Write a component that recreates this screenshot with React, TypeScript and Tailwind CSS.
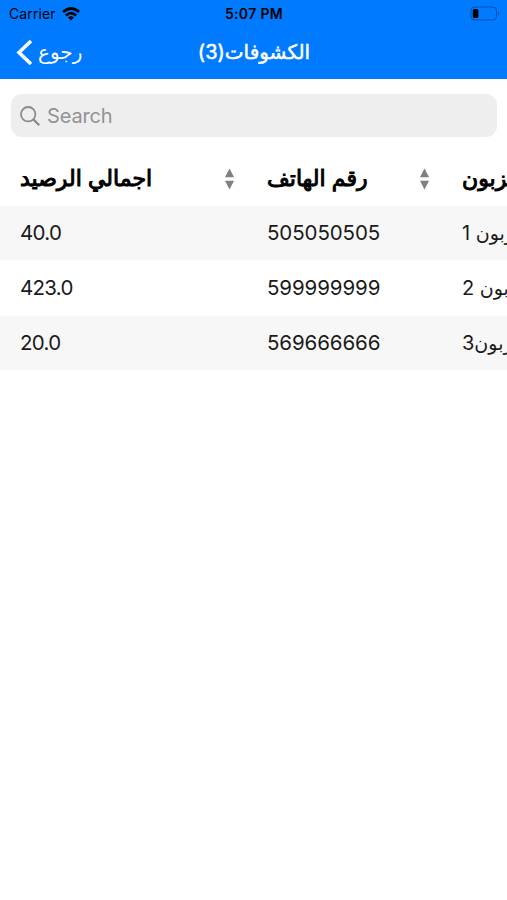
interface Customer {
  balance: string;
  phone: string;
  name: string;
  suffix: string;
}

const customers: Customer[] = [
  { balance: "40.0", phone: "505050505", name: "زبون", suffix: " 1" },
  { balance: "423.0", phone: "599999999", name: "زبون", suffix: " 2" },
  { balance: "20.0", phone: "569666666", name: "زبون", suffix: "3" },
];

const SortIcon = () => (
  <svg className="w-[10px] h-[22px] shrink-0" viewBox="0 0 10 22" fill="#808080">
    <path d="M4.5 0.5L9.1 9.3H0z" />
    <path d="M0 12.8H9.1L4.5 21.5z" />
  </svg>
);

const StatusBar = () => (
  <div className="h-[27px] grid grid-cols-3 items-center pl-[9px] pr-[7px] text-black">
    <div className="flex items-center gap-[6px]">
      <span className="text-[14px] leading-none tracking-[0.1px]">Carrier</span>
      <svg className="w-[18px] h-[14px]" viewBox="0 0 18 14" fill="none" stroke="#000" strokeWidth="2.7">
        <path d="M1 5.1Q9 -2.1 17 5.1" />
        <path d="M3.9 8.4Q9 3.9 14.1 8.4" />
        <path d="M9 13.6L6 10.5Q9 8.1 12 10.5z" fill="#000" stroke="none" />
      </svg>
    </div>
    <span className="text-center text-[14px] leading-none font-semibold tracking-[0.35px] pt-px pr-px">5:07 PM</span>
    <svg className="w-[30px] h-[15px] justify-self-end" viewBox="0 0 30 15">
      <rect x="1" y="1" width="25.5" height="13" rx="3.5" fill="none" stroke="#004fa8" />
      <rect x="2.8" y="3" width="5.6" height="9" rx="1.5" fill="#000" />
      <path d="M28 5.2Q30 7.5 28 9.8z" fill="#004fa8" />
    </svg>
  </div>
);

const NavBar = () => (
  <div className="h-[52px] grid grid-cols-3 items-center pl-[16px] pr-[15px] pb-[2px] text-white">
    <button className="flex items-center gap-[5px]">
      <svg className="w-[17px] h-[27px]" viewBox="0 0 17 27" fill="none" stroke="#fff" strokeWidth="3.6">
        <path d="M15 2L3 13.5L15 25" />
      </svg>
      <span dir="rtl" className="text-[20px] leading-none">رجوع</span>
    </button>
    <h1 dir="rtl" className="text-center text-[20px] leading-none whitespace-nowrap [-webkit-text-stroke:0.5px_white]">
      الكشوفات<span>(3)</span>
    </h1>
  </div>
);

const SearchBar = () => (
  <div className="mt-[15px] ml-[11px] mr-[10px] h-[43px] rounded-[11px] bg-[#eeeeee] flex items-center pl-[9px] gap-[7px]">
    <svg className="w-[20px] h-[20px]" viewBox="0 0 20 20" fill="none" stroke="#8a8a8d" strokeWidth="1.8">
      <circle cx="8.2" cy="8.2" r="7.2" />
      <path d="M13.4 13.4L19.2 19.2" strokeWidth="2.2" />
    </svg>
    <span className="text-[20px] leading-none text-[#929295] tracking-[-0.15px]">Search</span>
  </div>
);

const App = () => {
  return (
    <div className="w-full h-[900px] bg-white overflow-hidden font-['Inter','DejaVu_Sans',sans-serif]">
      <header className="bg-[#007aff]">
        <StatusBar />
        <NavBar />
      </header>
      <SearchBar />

      {/* table runs past the right edge of the screen */}
      <div className="mt-[14px] overflow-hidden text-[20px] text-[#1a1a1a]">
        <div className="w-[720px] h-[55px] grid grid-cols-[247px_195px_278px] items-center text-[22px] text-black [-webkit-text-stroke:1px_black]">
          <div className="flex items-center justify-between pl-[20px] pr-[12px]">
            <span dir="rtl" className="whitespace-nowrap">اجمالي الرصيد</span>
            <SortIcon />
          </div>
          <div className="flex items-center justify-between pl-[20px] pr-[12px]">
            <span dir="rtl" className="whitespace-nowrap">رقم الهاتف</span>
            <SortIcon />
          </div>
          <div className="flex items-center justify-between pl-[20px] pr-[12px]">
            <span dir="rtl" className="whitespace-nowrap">اسم الزبون</span>
            <SortIcon />
          </div>
        </div>
        {customers.map((customer) => (
          <div
            key={customer.phone}
            className="w-[720px] h-[54px] even:bg-[#f7f7f7] odd:h-[56px] grid grid-cols-[247px_195px_278px] items-center"
          >
            <span className="pl-[20px] pt-px text-[20.5px] tracking-[-0.7px]">{customer.balance}</span>
            <span className="pl-[20px] pt-px text-[20.5px] tracking-[-0.1px]">{customer.phone}</span>
            <div className="flex pl-[20px]">
              <span dir="rtl" className="whitespace-pre text-[19px]">
                {customer.name}
                <span className="text-[20px]">{customer.suffix}</span>
              </span>
            </div>
          </div>
        ))}
      </div>
    </div>
  );
};

export default App;
